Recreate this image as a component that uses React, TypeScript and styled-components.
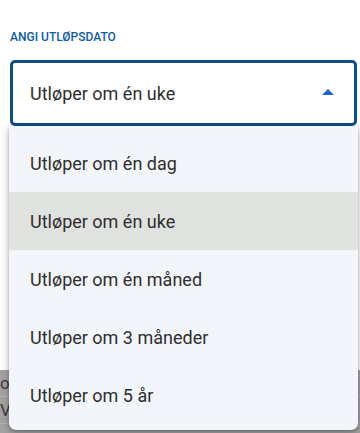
import { useState } from 'react';
import styled, { createGlobalStyle } from 'styled-components';

const GlobalStyle = createGlobalStyle`
  html, body {
    margin: 0;
    padding: 0;
    background: #ffffff;
    font-family: Roboto, "Liberation Sans", sans-serif;
  }
`;

const OPTIONS = [
  'Utløper om én dag',
  'Utløper om én uke',
  'Utløper om én måned',
  'Utløper om 3 måneder',
  'Utløper om 5 år',
];

const Page = styled.div`
  position: relative;
  width: 360px;
  height: 433px;
  overflow: hidden;
`;

const Field = styled.div`
  position: relative;
  padding: 29px 3px 0 10px;
`;

const Label = styled.label`
  display: block;
  font-size: 12px;
  line-height: 16px;
  font-weight: 500;
  color: #0b5ca6;
  margin-bottom: 15px;
`;

const SelectBox = styled.button`
  display: flex;
  align-items: center;
  justify-content: space-between;
  width: 100%;
  height: 66px;
  box-sizing: border-box;
  border: 3px solid #0b4e8c;
  border-radius: 5px;
  background: #ffffff;
  padding: 0 20px 0 17px;
  font-family: inherit;
  font-size: 18px;
  color: #2e2e2e;
  cursor: pointer;
  text-align: left;
`;

const Caret = styled.span`
  width: 0;
  height: 0;
  border-left: 6px solid transparent;
  border-right: 6px solid transparent;
  border-bottom: 6px solid #1464d2;
  margin-top: -3px;
`;

const Menu = styled.ul`
  position: absolute;
  top: 126px;
  left: 9px;
  width: 349px;
  margin: 0;
  padding: 8px 0 6px;
  list-style: none;
  background: #f2f6fb;
  border-radius: 0 0 7px 7px;
  box-shadow: 0 3px 8px rgba(0, 0, 0, 0.28), 0 1px 3px rgba(0, 0, 0, 0.18);
  z-index: 2;
`;

const Option = styled.li<{ $active: boolean }>`
  height: 58px;
  display: flex;
  align-items: center;
  padding-left: 21px;
  font-size: 18px;
  color: #2e2e2e;
  background: ${(p) => (p.$active ? '#e0e2df' : 'transparent')};
  cursor: pointer;
`;

const Behind = styled.div`
  position: absolute;
  left: 0;
  right: 0;
  top: 370px;
  bottom: 0;
  background: #a3a3a3;
  z-index: 1;
`;

const BehindRow = styled.div`
  height: 26px;
  display: flex;
  align-items: center;
  font-size: 17px;
  color: #3a3a3a;
  border-bottom: 1px solid #b4b4b4;
  white-space: nowrap;
`;

export default function App() {
  const [value, setValue] = useState(OPTIONS[1]);
  const [open, setOpen] = useState(true);

  return (
    <Page>
      <GlobalStyle />
      <Behind>
        <BehindRow>or</BehindRow>
        <BehindRow>Vi</BehindRow>
      </Behind>
      <Field>
        <Label>ANGI UTLØPSDATO</Label>
        <SelectBox onClick={() => setOpen(!open)}>
          <span>{value}</span>
          <Caret />
        </SelectBox>
      </Field>
      {open && (
        <Menu>
          {OPTIONS.map((opt) => (
            <Option key={opt} $active={opt === value} onClick={() => setValue(opt)}>
              {opt}
            </Option>
          ))}
        </Menu>
      )}
    </Page>
  );
}
